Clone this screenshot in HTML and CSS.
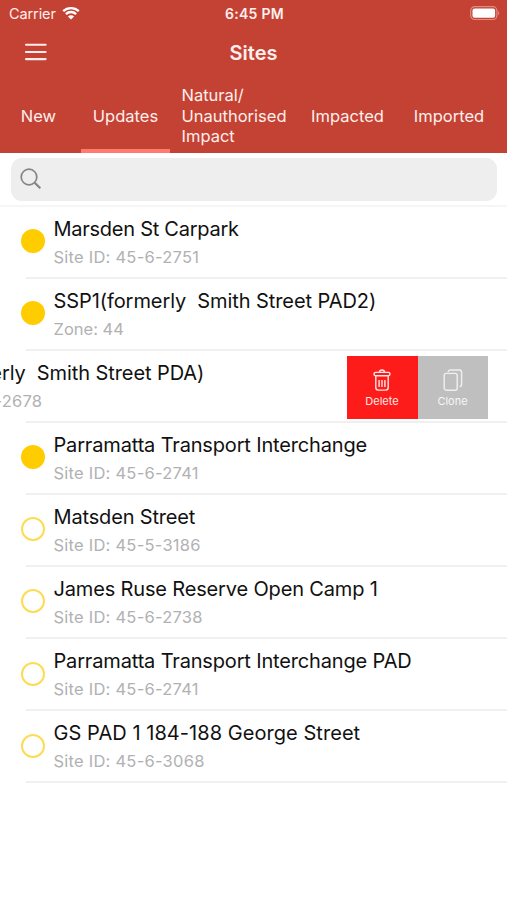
FILE: index.html
```html
<!DOCTYPE html>
<html lang="en">
<head>
<meta charset="utf-8">
<title>Sites</title>
<link rel="stylesheet" href="styles.css">
</head>
<body>
<header class="header">
  <div class="status">
    <div class="carrier"><span>Carrier</span>
      <svg class="wifi" viewBox="0 0 18 14" width="18" height="14"><path d="M1.2 5.2a11.2 11.2 0 0 1 15.6 0M3.9 8.1a7.3 7.3 0 0 1 10.2 0" fill="none" stroke="#fff" stroke-width="2.3"/><path d="M9 13.6 5.9 10.5a4.4 4.4 0 0 1 6.2 0z" fill="#fff"/></svg>
    </div>
    <div class="time">6:45 PM</div>
    <svg class="battery" viewBox="0 0 30 15" width="30" height="15"><rect x=".7" y=".7" width="26.2" height="12.8" rx="4" fill="none" stroke="#e08c83" stroke-width="1.2"/><rect x="2.5" y="2.4" width="22.6" height="9.4" rx="2" fill="#fff"/><path d="M28.2 4.8c1.4.8 1.4 3.8 0 4.6z" fill="#e08c83"/></svg>
  </div>
  <div class="navbar">
    <svg class="menu" viewBox="0 0 22 18" width="22" height="18"><path d="M1 1.7h19.6M1 9h19.6M1 16.1h19.6" stroke="#ffeceb" stroke-width="2.1" stroke-linecap="round"/></svg>
    <h1 class="title">Sites</h1>
  </div>
  <nav class="tabs">
    <div class="tab"><span>New</span></div>
    <div class="tab active"><span>Updates</span></div>
    <div class="tab"><span>Natural/<br>Unauthorised<br>Impact</span></div>
    <div class="tab"><span>Impacted</span></div>
    <div class="tab"><span>Imported</span></div>
  </nav>
</header>
<div class="searchbar">
  <div class="search"><svg viewBox="0 0 22 22" width="22" height="22" fill="none" stroke="#858585"><circle cx="9" cy="9" r="7.8" stroke-width="1.7"/><path d="m14.7 14.7 5.6 5.6" stroke-width="2.2"/></svg></div>
</div>
<main class="list">
  <div class="row"><i class="dot full"></i><div class="text"><div class="name snug">Marsden St Carpark</div><div class="sub">Site ID: 45-6-2751</div></div></div>
  <div class="row"><i class="dot full"></i><div class="text"><div class="name loose">SSP1(formerly  Smith Street PAD2)</div><div class="sub zone">Zone: 44</div></div></div>
  <div class="row swiped"><i class="dot full"></i><div class="text"><div class="name loose">SSP1(formerly  Smith Street PDA)</div><div class="sub">Site ID: 45-6-2678</div></div>
    <div class="actions">
      <div class="action delete"><svg viewBox="0 0 18 22" width="18" height="22" fill="none" stroke="#ffe6e6" stroke-width="1.4"><rect x="1" y="3.4" width="16" height="3.4" rx="1.7"/><path d="M6.4 3.2C6.6.2 11.4.2 11.6 3.2M2.8 7v11.6q0 2.5 2.5 2.5h7.4q2.5 0 2.5-2.5V7M6.1 11v7M9 11v7M11.9 11v7"/></svg><span>Delete</span></div>
      <div class="action clone"><svg viewBox="0 0 20 22" width="20" height="22" fill="none" stroke="#f0f0f0" stroke-width="1.4"><rect x="1.2" y="4.4" width="13" height="16.8" rx="2"/><path d="M5.2 2.9Q5.4 1 7.2 1h9.2q2.2 0 2.2 2.2v12.2q0 2-2 2.2"/></svg><span>Clone</span></div>
    </div>
  </div>
  <div class="row"><i class="dot full"></i><div class="text"><div class="name">Parramatta Transport Interchange</div><div class="sub">Site ID: 45-6-2741</div></div></div>
  <div class="row"><i class="dot"></i><div class="text"><div class="name">Matsden Street</div><div class="sub">Site ID: 45-5-3186</div></div></div>
  <div class="row"><i class="dot"></i><div class="text"><div class="name">James Ruse Reserve Open Camp 1</div><div class="sub">Site ID: 45-6-2738</div></div></div>
  <div class="row"><i class="dot"></i><div class="text"><div class="name">Parramatta Transport Interchange PAD</div><div class="sub">Site ID: 45-6-2741</div></div></div>
  <div class="row"><i class="dot"></i><div class="text"><div class="name wide">GS PAD 1 184-188 George Street</div><div class="sub">Site ID: 45-6-3068</div></div></div>
</main>
</body>
</html>
```

FILE: styles.css
```css
* { box-sizing: border-box; }
body {
  margin: 0;
  width: 507px;
  height: 900px;
  overflow: hidden;
  background: #fff;
  font-family: Inter, Roboto, "Liberation Sans", sans-serif;
}
svg { display: block; flex: none; }
.header { height: 152.5px; background: #c44234; color: #ffefed; }
.status {
  display: grid;
  grid-template-columns: 1fr auto 1fr;
  align-items: center;
  height: 27px;
  padding: 0 7px 0 9px;
}
.carrier { display: flex; align-items: center; gap: 6px; font-size: 14.5px; letter-spacing: -0.1px; }
.wifi { margin-top: -2px; }
.time { font-size: 14px; font-weight: 600; letter-spacing: 0.3px; }
.battery { justify-self: end; }
.navbar {
  display: grid;
  grid-template-columns: 60px 1fr 60px;
  align-items: center;
  height: 50px;
}
.menu { margin-left: 25px; }
.title { margin: 0; padding-top: 1px; text-align: center; font-size: 20px; font-weight: 600; letter-spacing: 0; }
.tabs {
  display: grid;
  grid-template-columns: 77px 89px 120px 99px 96px;
  column-gap: 4px;
  height: 75.5px;
}
.tab {
  display: flex;
  align-items: center;
  justify-content: center;
  padding-top: 6px;
  border-bottom: 4px solid transparent;
  font-size: 16.5px;
  line-height: 20.3px;
  white-space: nowrap;
}
.active { border-bottom-color: #ff7b70; }
.searchbar { height: 54px; padding: 5px 10px 0 11px; border-bottom: 2px solid #f6f6f7; }
.search {
  display: flex;
  align-items: center;
  height: 43px;
  padding-left: 9px;
  border-radius: 11px;
  background: #eee;
}
.row {
  position: relative;
  display: flex;
  height: 72.1px;
  padding-left: 20.5px;
}
.row::after {
  content: "";
  position: absolute;
  left: 26px;
  right: 0;
  bottom: 0;
  height: 2px;
  background: #f0f0f1;
}
.dot {
  flex: none;
  width: 24px;
  height: 24px;
  margin-top: 22.5px;
  border: 2px solid #fddc55;
  border-radius: 50%;
}
.full { border: 0; background: #fc0; }
.text { flex: none; margin-left: 9px; padding-top: 9px; white-space: pre; }
.name { height: 27px; line-height: 27px; font-size: 20px; letter-spacing: -0.16px; color: #111; }
.snug { letter-spacing: -0.26px; }
.loose { letter-spacing: -0.08px; }
.wide { letter-spacing: 0.05px; }
.sub { height: 28px; line-height: 28px; font-size: 16.5px; letter-spacing: 0.24px; color: #b1b1b3; }
.zone { letter-spacing: 0; }
.swiped { overflow: hidden; }
.swiped .dot { margin-left: -160.5px; }
.actions { display: flex; margin: 5px 19.5px 0 auto; height: 63px; }
.action {
  display: flex;
  flex-direction: column;
  align-items: center;
  width: 70px;
  padding-top: 13px;
  font-size: 11px;
  line-height: 14px;
  gap: 3px;
}
.delete { width: 71px; background: #fe1c1b; color: #ffe6e6; }
.clone { background: #bfbfbf; color: #f6f6f6; }
```
